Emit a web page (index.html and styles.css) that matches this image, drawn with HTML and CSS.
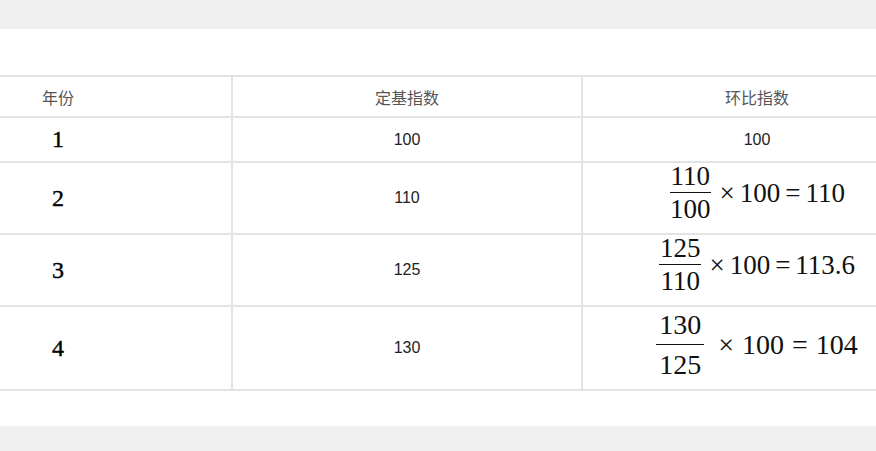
FILE: index.html
```html
<!DOCTYPE html>
<html lang="zh">
<head>
<meta charset="utf-8">
<link rel="stylesheet" href="styles.css">
</head>
<body>
<div class="topbar"></div>
<div class="panel">
  <div class="scroll">
    <table class="tbl">
      <colgroup><col class="c1"><col class="c2"><col class="c3"></colgroup>
      <thead>
        <tr class="hrow"><th>年份</th><th>定基指数</th><th>环比指数</th></tr>
      </thead>
      <tbody>
        <tr class="r1"><td class="yr">1</td><td class="num">100</td><td class="num">100</td></tr>
        <tr class="r2"><td class="yr">2</td><td class="num">110</td>
          <td><span class="math"><span class="frac"><span class="nu">110</span><span class="de">100</span></span><span class="op">×</span>100<span class="op">=</span>110</span></td></tr>
        <tr class="r3"><td class="yr">3</td><td class="num">125</td>
          <td><span class="math"><span class="frac"><span class="nu">125</span><span class="de">110</span></span><span class="op">×</span>100<span class="op">=</span>113.6</span></td></tr>
        <tr class="r4"><td class="yr">4</td><td class="num">130</td>
          <td><span class="math wide"><span class="frac"><span class="nu">130</span><span class="de">125</span></span><span class="op">×</span>100<span class="op">=</span>104</span></td></tr>
      </tbody>
    </table>
  </div>
</div>
<div class="bottombar"></div>
</body>
</html>
```
FILE: styles.css
```css
html, body {
  margin: 0;
  padding: 0;
  background: #efefef;
}
.topbar {
  height: 29px;
}
.panel {
  background: #ffffff;
  padding: 46px 0 35px;
}
.scroll {
  overflow: hidden;
}
.tbl {
  border-collapse: collapse;
  table-layout: fixed;
  width: 1048px;
  margin-left: -117px;
}
.c1 { width: 348px; }
.c2 { width: 350px; }
.c3 { width: 350px; }
.tbl th, .tbl td {
  border: 2px solid #e3e3e3;
  padding: 0;
  text-align: center;
  vertical-align: middle;
}
.tbl th {
  font-family: "Noto Sans CJK SC", sans-serif;
  font-weight: 400;
  font-size: 16px;
  color: #555;
}
.hrow { height: 41px; }
.r1 { height: 45px; }
.r2 { height: 72px; }
.r3 { height: 72px; }
.r4 { height: 84px; }
.yr {
  font-family: "Liberation Serif", serif;
  font-size: 24px;
  color: #000;
  -webkit-text-stroke: 0.4px #000;
}
.yr, .num, .math { position: relative; }
.num {
  font-family: "Liberation Sans", Arial, sans-serif;
  font-size: 16px;
  color: #222;
}
.math {
  display: inline-flex;
  align-items: center;
  font-family: "Liberation Serif", serif;
  font-size: 27px;
  color: #111;
  line-height: 1;
  top: -5px;
}
.frac {
  display: inline-flex;
  flex-direction: column;
  align-items: center;
  margin-right: 3px;
}
.nu {
  padding: 0 1px 2px;
  border-bottom: 1.5px solid #111;
}
.de {
  padding: 3px 1px 0;
}
.op {
  margin: 0 5px;
}
.wide {
  font-size: 28px;
  top: -3px;
}
.wide .frac { margin-right: 6px; }
.wide .op { margin: 0 8px; }
.wide .nu { padding: 0 3px 5px; }
.wide .de { padding-top: 6px; }
.bottombar {
  height: 25px;
}
```
